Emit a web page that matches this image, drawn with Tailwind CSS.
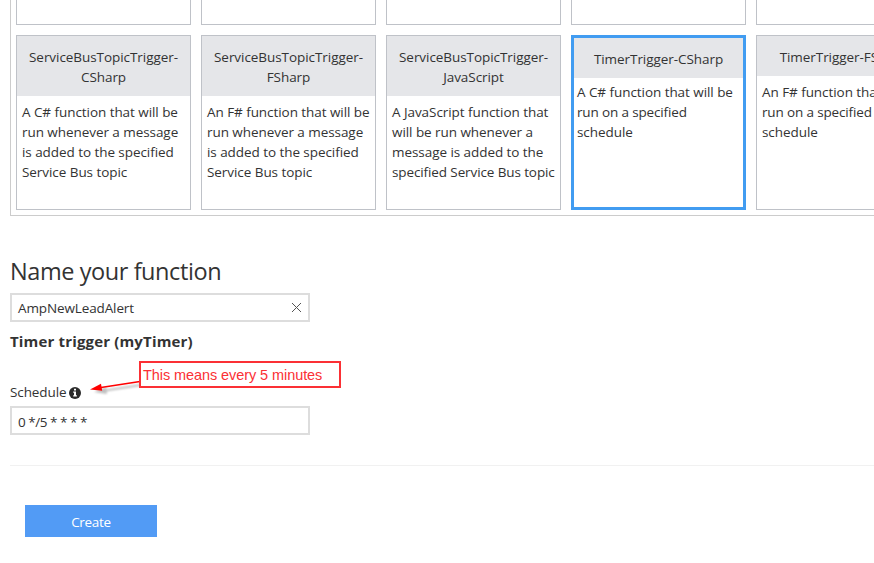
<!DOCTYPE html>
<html lang="en">
<head>
<meta charset="utf-8">
<title>New function</title>
<script src="https://cdn.jsdelivr.net/npm/@tailwindcss/browser@4"></script>
</head>
<body class="h-[563px] w-[874px] overflow-hidden bg-white font-['Open_Sans','Noto_Sans',sans-serif] text-[13.5px] leading-5 tracking-[-0.06px] text-[#333]">
  <section class="ml-2.5 flex h-[216px] w-[864px] flex-col gap-2.5 overflow-hidden border-b border-l border-[#ccc] pl-[5px] whitespace-nowrap">
    <div class="flex h-[25px] gap-2.5">
      <div class="w-[175px] shrink-0 border border-t-0 border-[#bfc2c8]"></div>
      <div class="w-[175px] shrink-0 border border-t-0 border-[#bfc2c8]"></div>
      <div class="w-[175px] shrink-0 border border-t-0 border-[#bfc2c8]"></div>
      <div class="w-[175px] shrink-0 border border-t-0 border-[#bfc2c8]"></div>
      <div class="w-[175px] shrink-0 border border-t-0 border-[#bfc2c8]"></div>
    </div>
    <div class="flex h-[175px] gap-2.5">
      <article class="w-[175px] shrink-0 border border-[#bfc2c8]">
        <h3 class="h-[60px] bg-[#e5e6e9] pt-[11px] text-center">ServiceBusTopicTrigger-<br>CSharp</h3>
        <p class="pt-1.5 pl-[5px]">A C# function that will be<br>run whenever a message<br>is added to the specified<br>Service Bus topic</p>
      </article>
      <article class="w-[175px] shrink-0 border border-[#bfc2c8]">
        <h3 class="h-[60px] bg-[#e5e6e9] pt-[11px] text-center">ServiceBusTopicTrigger-<br>FSharp</h3>
        <p class="pt-1.5 pl-[5px]">An F# function that will be<br>run whenever a message<br>is added to the specified<br>Service Bus topic</p>
      </article>
      <article class="w-[175px] shrink-0 border border-[#bfc2c8]">
        <h3 class="h-[60px] bg-[#e5e6e9] pt-[11px] text-center">ServiceBusTopicTrigger-<br>JavaScript</h3>
        <p class="pt-1.5 pl-[5px]">A JavaScript function that<br>will be run whenever a<br>message is added to the<br><span class="tracking-[-0.11px]">specified Service Bus topic</span></p>
      </article>
      <article class="w-[175px] shrink-0 border-3 border-[#419cf1]">
        <h3 class="h-10 bg-[#e5e6e9] pt-[11px] text-center">TimerTrigger-CSharp</h3>
        <p class="pt-1 pl-[3px]">A C# function that will be<br><span class="tracking-[-0.15px]">run on a specified</span><br>schedule</p>
      </article>
      <article class="w-[175px] shrink-0 border border-[#bfc2c8]">
        <h3 class="h-10 bg-[#e5e6e9] pt-[11px] text-center">TimerTrigger-FSharp</h3>
        <p class="pt-1.5 pl-[5px]">An F# function that will be<br><span class="tracking-[-0.15px]">run on a specified</span><br>schedule</p>
      </article>
    </div>
  </section>

  <main class="ml-2.5 pt-[39px]">
    <h2 class="h-[38px] text-[23.5px] leading-8 tracking-[-0.42px]">Name your function</h2>
    <div class="flex h-[29px] w-[300px] items-center justify-between border-2 border-[#ddd] pr-[6px] pl-1.5">
      <span class="tracking-[-0.12px]">AmpNewLeadAlert</span>
      <svg class="mb-px h-[11px] w-[11px]" viewBox="0 0 11 11" fill="none" stroke="#555" stroke-width="1"><path d="M1 1l9 9M10 1l-9 9"/></svg>
    </div>
    <section class="relative h-[144px] w-[864px] border-b border-[#f1f1f1] pt-[9px]">
      <h3 class="text-[15px] font-bold tracking-[0.16px]">Timer trigger (myTimer)</h3>
      <div class="flex h-[55px] items-end gap-[3px] pb-1">
        <span class="tracking-[-0.1px]">Schedule</span>
        <svg class="mb-[3px] h-3 w-3" viewBox="0 0 12 12"><circle cx="6" cy="6" r="6" fill="#2b2b2b"/><path d="M5 1.7h2v1.8H5zM4.2 4.5H7v3.7h.9v1.3H4.2V8.2H5V5.8h-.8z" fill="#fff"/></svg>
      </div>
      <div class="flex h-[29px] w-[300px] items-center border-2 border-[#ddd] pt-0.5 pl-1.5 tracking-[-0.48px]">0 */5 * * * *</div>
      <svg class="absolute top-[50px] left-[76px] h-7 w-14" viewBox="0 0 56 28" fill="none">
        <g class="opacity-25 blur-[1px]"><path d="M55 13L16 19" stroke="#000" stroke-width="2"/><path d="M8 20l12-5 1 7z" fill="#000"/></g>
        <path d="M54 9.5L15 15.5" stroke="#f00" stroke-width="1.5"/><path d="M4 17.5L15 11.8l1.2 7z" fill="#f00"/>
      </svg>
      <div class="absolute top-[39px] left-[129px] flex h-[27px] w-[202px] items-center border-2 border-[#fb3035] bg-white pt-px pl-0.5 font-['Liberation_Sans',Arial,sans-serif] text-[14.5px] tracking-[-0.08px] whitespace-nowrap text-[#fb3035]">This means every 5 minutes</div>
    </section>
    <button class="mt-[39px] ml-[15px] block h-8 w-[132px] bg-[#529bf5] pt-0.5 text-center tracking-[-0.3px] text-white">Create</button>
  </main>
</body>
</html>
